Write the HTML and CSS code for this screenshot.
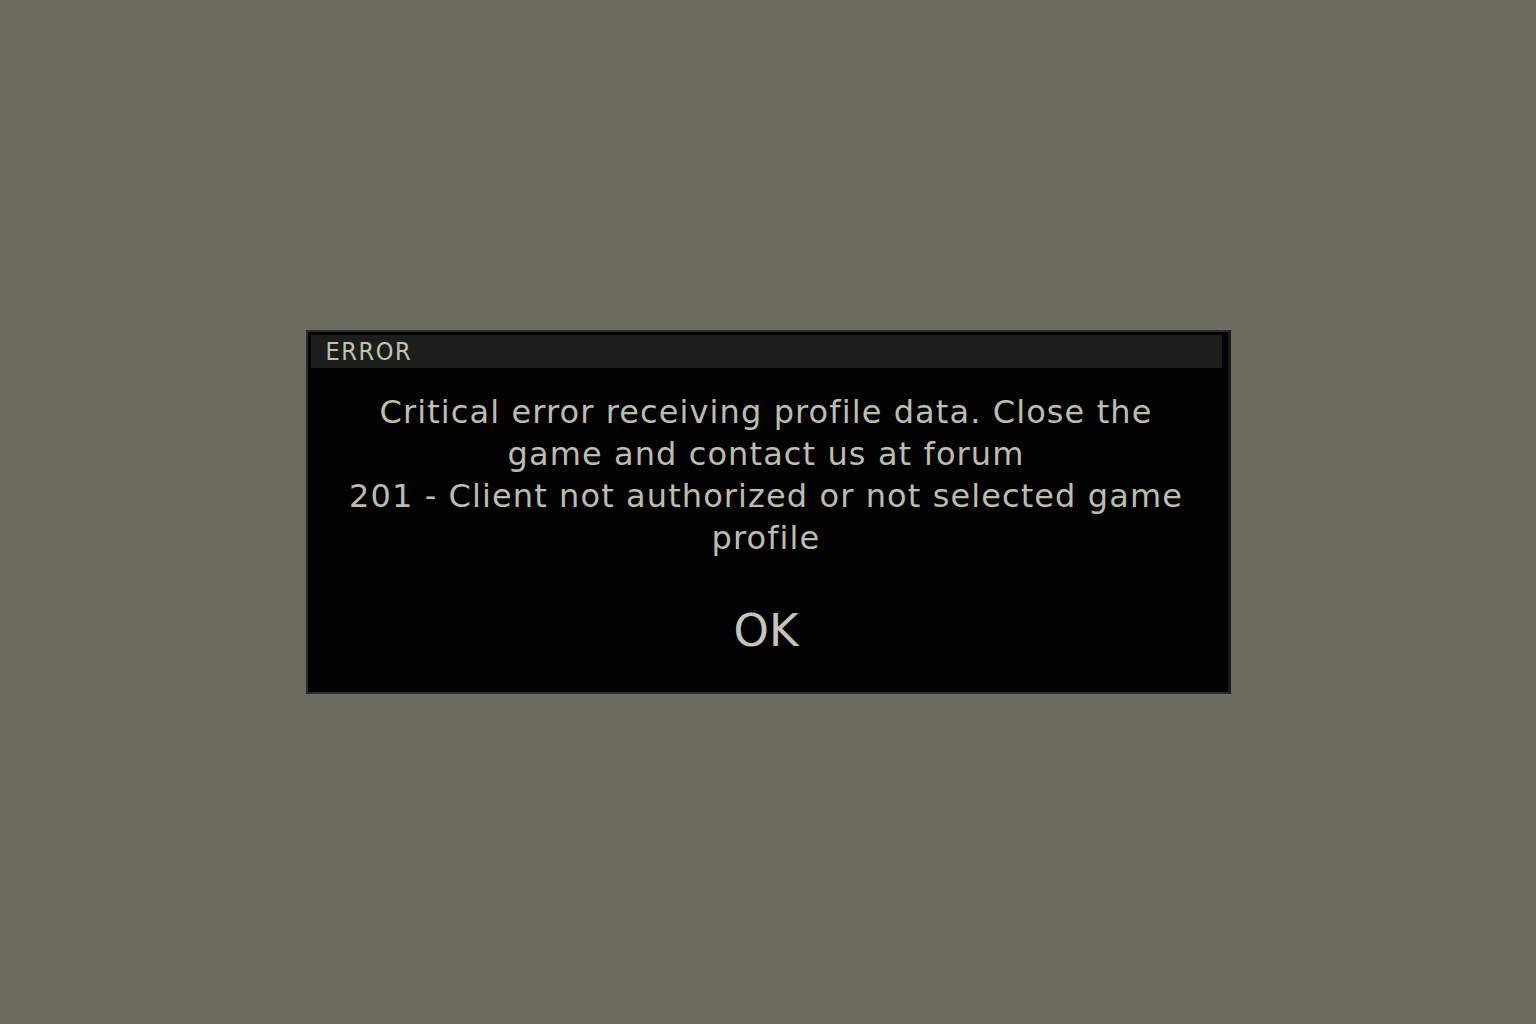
FILE: index.html
```html
<!DOCTYPE html>
<html>
<head>
<meta charset="utf-8">
<link rel="stylesheet" href="styles.css">
</head>
<body>
<div class="page">
  <div class="dialog">
    <div class="header"><span class="title">ERROR</span></div>
    <div class="message">
      <p class="line">Critical error receiving profile data. Close the<br>game and contact us at forum<br>201 - Client not authorized or not selected game<br>profile</p>
    </div>
    <div class="actions"><span class="ok">OK</span></div>
  </div>
</div>
</body>
</html>
```
FILE: styles.css
```css
html, body {
  margin: 0;
  padding: 0;
  background: #6b6b60;
}
.page {
  width: 1536px;
  height: 1024px;
  display: flex;
  justify-content: center;
  align-items: flex-start;
  padding-top: 330px;
  box-sizing: border-box;
}
.dialog {
  width: 925px;
  height: 364px;
  box-sizing: border-box;
  background: #020202;
  border: 2px solid #2b2c29;
  border-right: 3px solid #1a1a18;
  padding: 3px 6px 0 3px;
  display: flex;
  flex-direction: column;
  font-family: "DejaVu Sans", sans-serif;
  color: #bdbdae;
}
.header {
  height: 33px;
  background: #1c1e1c;
  display: flex;
  align-items: center;
  padding-left: 15px;
}
.title {
  font-family: "DejaVu Sans Condensed", "DejaVu Sans", sans-serif;
  font-size: 25px;
  letter-spacing: 1.6px;
  color: #c2c2b2;
}
.message {
  text-align: center;
  margin-top: 23px;
}
.line {
  margin: 0;
  font-size: 32px;
  line-height: 42px;
  letter-spacing: 1.1px;
}
.actions {
  text-align: center;
  margin-top: 42px;
}
.ok {
  font-size: 45px;
  line-height: 60px;
  color: #c5c5b5;
}
```
